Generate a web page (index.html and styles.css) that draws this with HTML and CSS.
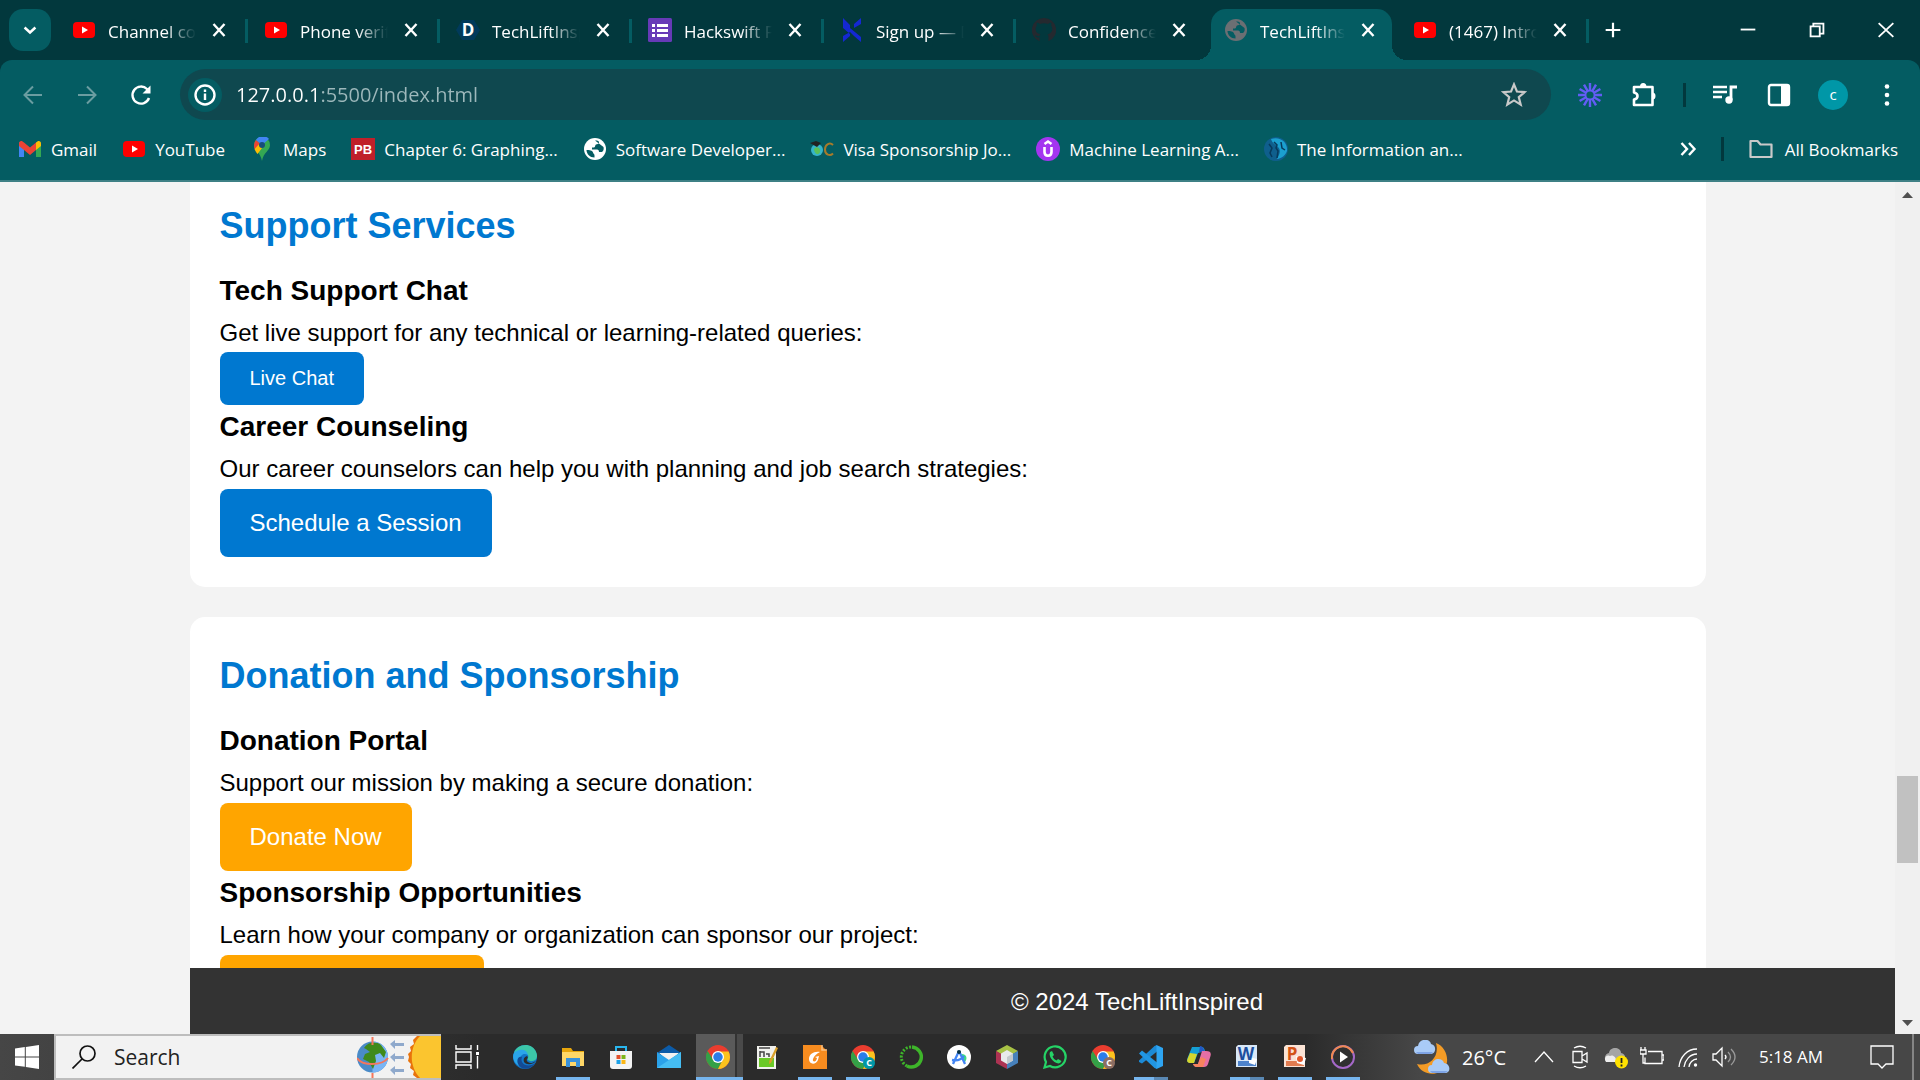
FILE: index.html
```
<!DOCTYPE html>
<html lang="en">
<head>
    <meta charset="UTF-8">
    <meta name="viewport" content="width=device-width, initial-scale=1.0">
    <title>TechLiftInspired</title>
    <link rel="stylesheet" href="styles.css">
</head>
<body>
    <!-- Shared icons -->
    <svg class="sprite" aria-hidden="true">
        <symbol id="i-youtube" viewBox="0 0 24 24">
            <rect x="1" y="4" width="22" height="16" rx="4" fill="#f00"/>
            <path d="M10 8.500v7l6-3.500z" fill="#fff"/>
        </symbol>
        <symbol id="i-globe" viewBox="0 0 24 24">
            <circle cx="12" cy="12" r="11" fill="currentColor"/>
            <path class="land" d="M12 3.500c3 0 4 .5 4 2s-2 1.500-3 2-.5 2.500-2 3H9v2h5c1.500 0 2 1 2 2.500h3c1.500-1 2-3 1.500-5M3.500 13c3 0 6 .5 6.500 2.500s1.500 1 1.500 3v2C7 20.500 3.500 17 3.500 13z"/>
        </symbol>
        <symbol id="i-close" viewBox="0 0 24 24">
            <path d="M6.500 6l11 12M17.500 6l-11 12" stroke="currentColor" stroke-width="2.400" fill="none"/>
        </symbol>
        <symbol id="i-chrome" viewBox="0 0 48 48">
            <circle cx="24" cy="24" r="24" fill="#ea3d2f"/>
            <path d="M3.200 12 14.500 29.500 24 35l9.500-5.500L24 48A24 24 0 0 1 3.200 12z" fill="#34a047"/>
            <path d="M24 13h21.300A24 24 0 0 1 24 48l9.500-18.500z" fill="#fcc31e"/>
            <circle cx="24" cy="24" r="12" fill="#fff"/>
            <circle cx="24" cy="24" r="9.500" fill="#2b7de9"/>
        </symbol>
    </svg>

    <!-- Tab strip -->
    <header class="tab-strip">
        <button class="tab-search" aria-label="Search tabs">
            <svg viewBox="0 0 24 24"><path d="M5.500 9l6.500 6 6.500-6" stroke="#fff" stroke-width="3" fill="none"/></svg>
        </button>
        <div class="tabs">
            <div class="tab">
                <svg class="favicon"><use href="#i-youtube"/></svg>
                <span class="tab-title">Channel content</span>
                <button class="tab-close" aria-label="Close"><svg><use href="#i-close"/></svg></button>
            </div>
            <div class="tab">
                <svg class="favicon"><use href="#i-youtube"/></svg>
                <span class="tab-title">Phone verification</span>
                <button class="tab-close" aria-label="Close"><svg><use href="#i-close"/></svg></button>
            </div>
            <div class="tab">
                <svg class="favicon" viewBox="0 0 24 24"><path d="M6 2h12l6 10-6 10H6L0 12z" fill="#003a5b"/><text x="12" y="18" class="letter">D</text></svg>
                <span class="tab-title">TechLiftInspired</span>
                <button class="tab-close" aria-label="Close"><svg><use href="#i-close"/></svg></button>
            </div>
            <div class="tab">
                <svg class="favicon" viewBox="0 0 24 24"><rect width="24" height="24" rx="1.500" fill="#673ab7"/><path d="M4 6h3v3H4zM9 6h11v3H9zM4 11h3v3H4zM9 11h11v3H9zM4 16h3v3H4zM9 16h11v3H9z" fill="#fff"/></svg>
                <span class="tab-title">Hackswift Form</span>
                <button class="tab-close" aria-label="Close"><svg><use href="#i-close"/></svg></button>
            </div>
            <div class="tab">
                <svg class="favicon" viewBox="0 0 24 24"><path d="M3 0l7 7v9l-7-6zM21 0l-7 6v4l7-4zM10 10l11 9v5l-7-6-4-4zM3 24l7-6v-4l-7 4z" fill="#1428d2"/></svg>
                <span class="tab-title">Sign up — Devpost</span>
                <button class="tab-close" aria-label="Close"><svg><use href="#i-close"/></svg></button>
            </div>
            <div class="tab tab-last">
                <svg class="favicon" viewBox="0 0 24 24"><path d="M12 0a12 12 0 0 0-4.500 23.200v-4c-3 .7-4-.5-4.500-2 2 0 2.500 1.500 4.500 1 0-1 .4-1.500 1-2-4-.6-5-2.700-4.800-5.800.1-1 .5-2 1.100-2.700-.3-1-.2-2 .1-3 1.200 0 2.300.6 3.100 1.200a12 12 0 0 1 8 0c.8-.6 1.900-1.200 3.100-1.200.3 1 .4 2 .1 3 2 2.500 1.500 8-3.700 8.500.7.700 1 1.500 1 2.500v4.500A12 12 0 0 0 12 0z" fill="#24292f"/></svg>
                <span class="tab-title">Confidence-Dev</span>
                <button class="tab-close" aria-label="Close"><svg><use href="#i-close"/></svg></button>
            </div>
            <div class="tab active">
                <svg class="favicon gray"><use href="#i-globe"/></svg>
                <span class="tab-title">TechLiftInspired</span>
                <button class="tab-close" aria-label="Close"><svg><use href="#i-close"/></svg></button>
            </div>
            <div class="tab">
                <svg class="favicon"><use href="#i-youtube"/></svg>
                <span class="tab-title">(1467) Introduction</span>
                <button class="tab-close" aria-label="Close"><svg><use href="#i-close"/></svg></button>
            </div>
        </div>
        <button class="new-tab" aria-label="New tab">
            <svg viewBox="0 0 24 24"><path d="M12 4v16M4 12h16" stroke="#fff" stroke-width="2.400"/></svg>
        </button>
        <div class="window-controls">
            <button aria-label="Minimize"><svg viewBox="0 0 24 24"><path d="M4 11.500h16" stroke="#fff" stroke-width="2"/></svg></button>
            <button aria-label="Restore"><svg viewBox="0 0 24 24"><path d="M5 8h10v11H5zM8 8V5h11v11h-4" fill="none" stroke="#fff" stroke-width="2"/></svg></button>
            <button aria-label="Close window"><svg viewBox="0 0 24 24"><path d="M4 4.500l16 15M20 4.500l-16 15" stroke="#fff" stroke-width="2"/></svg></button>
        </div>
    </header>

    <!-- Address bar -->
    <div class="browser-bars">
        <nav class="toolbar">
            <button class="dim" aria-label="Back"><svg viewBox="0 0 24 24"><path d="M21 12H4M12 3.500 3.500 12l8.500 8.500" class="line"/></svg></button>
            <button class="dim" aria-label="Forward"><svg viewBox="0 0 24 24"><path d="M3 12h17M12 3.500l8.500 8.500-8.500 8.500" class="line"/></svg></button>
            <button aria-label="Reload"><svg viewBox="0 0 24 24"><path d="M20 15a8.500 8.500 0 1 1-2-9l2 2.500" class="line bold"/><path d="M21.500 2.500v8h-8z" fill="#fff"/></svg></button>
            <div class="omnibox">
                <button class="site-info" aria-label="Site information"><svg viewBox="0 0 24 24"><circle cx="12" cy="12" r="9.500" class="line bold"/><path d="M12 10.500V17M12 6.500V9" class="line bold"/></svg></button>
                <input class="url" type="text" value="127.0.0.1:5500/index.html" aria-label="Address">
                <button class="star" aria-label="Bookmark this page"><svg viewBox="0 0 24 24"><path d="M12 2.200l2.700 6.600 7.200.5-5.500 4.600 1.800 7L12 17l-6.200 3.900 1.800-7-5.500-4.600 7.200-.5z" class="line"/></svg></button>
            </div>
            <button aria-label="Loom"><svg viewBox="0 0 24 24"><g stroke="#625df5" stroke-width="2.400"><path d="M12 0v24M0 12h24M6 1.600l12 20.800M18 1.600 6 22.400M1.600 6l20.800 12M1.600 18 22.400 6"/></g><circle cx="12" cy="12" r="4.500" fill="#045c62" stroke="#625df5" stroke-width="1.800"/></svg></button>
            <button aria-label="Extensions"><svg viewBox="0 0 24 24"><path d="M2 4h18.500v18H2v-5.500c2.500-.5 3.500-2 3.500-3.500S4.500 10 2 9.500z" fill="none" stroke="#fff" stroke-width="2.600" stroke-linejoin="round"/><path d="M8 3.500a3.200 3.500 0 0 1 6.400 0zM20.500 9.500a3 3.500 0 0 1 0 7z" fill="#fff"/></svg></button>
            <span class="divider"></span>
            <button aria-label="Media controls"><svg viewBox="0 0 24 24"><path d="M0 4h14M0 9h14M0 14h9" stroke="#fff" stroke-width="2.600"/><path d="M18 17V4h6" fill="none" stroke="#fff" stroke-width="2.800"/><circle cx="16" cy="17" r="3.700" fill="#fff"/></svg></button>
            <button aria-label="Side panel"><svg viewBox="0 0 24 24"><rect x="2" y="2" width="20" height="20" rx="2" fill="none" stroke="#fff" stroke-width="2.400"/><path d="M14 2h7v20h-7z" fill="#fff"/></svg></button>
            <button aria-label="Profile"><span class="avatar">c</span></button>
            <button aria-label="Menu"><svg viewBox="0 0 24 24"><circle cx="12" cy="3.500" r="2.300" fill="#fff"/><circle cx="12" cy="12" r="2.300" fill="#fff"/><circle cx="12" cy="20.500" r="2.300" fill="#fff"/></svg></button>
        </nav>

        <!-- Bookmarks -->
        <nav class="bookmarks">
            <a href="#"><svg viewBox="0 0 24 24"><path d="M1 20V5l5 4v11z" fill="#4285f4"/><path d="M18 20V9l5-4v15z" fill="#34a853"/><path d="M18 9V5.500c2-2.500 5-2 5 1V9l-5 4z" fill="#fbbc04"/><path d="M1 9V6.500c0-3 3-3.500 5-1l6 5 6-5V13l-6 5-6-5z" fill="#ea4335"/></svg>Gmail</a>
            <a href="#"><svg><use href="#i-youtube"/></svg>YouTube</a>
            <a href="#"><svg viewBox="0 0 24 24"><path d="M12 0a8 8 0 0 1 8 8c0 6-6.500 7-8 16-1.500-9-8-10-8-16a8 8 0 0 1 8-8z" fill="#34a853"/><path d="M4 8a8 8 0 0 1 2-5l6 5-7 5c-.7-1.500-1-3-1-5z" fill="#ea4335"/><path d="M4.600 12 12 4v7l-4.500 6c-1.400-2-2.400-3-2.900-5z" fill="#fbbc04"/><path d="M6 3a8 8 0 0 1 13-1l-7 6z" fill="#4285f4"/><circle cx="12" cy="8" r="3" fill="#174e7a"/></svg>Maps</a>
            <a href="#"><svg viewBox="0 0 24 24"><path d="M0 1h24v22H0z" fill="#c0202a"/><text x="12" y="17" class="letter small">PB</text></svg>Chapter 6: Graphing...</a>
            <a href="#"><svg class="white"><use href="#i-globe"/></svg>Software Developer...</a>
            <a href="#"><svg viewBox="0 0 24 24"><circle cx="7" cy="13" r="6" fill="#35b5c9"/><path d="M4 13c0-3 5-4 6 0s-4 7-6 0z" fill="#5ac15a"/><path d="M0 6l6-2 5 2-4 4z" fill="#222"/><path d="M23 8c-3-3-8-1-8 4.500s5 7 8 4" fill="none" stroke="#a77b2a" stroke-width="2"/></svg>Visa Sponsorship Jo...</a>
            <a href="#"><svg viewBox="0 0 24 24"><circle cx="12" cy="12" r="12" fill="#a435f0"/><path d="M8.500 10v5c0 5 7 5 7 0v-5M8.500 7l3.500-2.500L15.500 7" fill="none" stroke="#fff" stroke-width="2.600"/></svg>Machine Learning A...</a>
            <a href="#"><svg viewBox="0 0 24 24"><circle cx="12" cy="12" r="12" fill="#0f5f8d"/><path d="M7 2c10-3 17 4 16 12-2 6-8 8-10 8 3-5 4-9 1-12s-6-4-7-8z" fill="#1ba0cf"/><path d="M10 5l3 3-1 3 2 3-1 7M5 7l3 4-2 5 2 4M17 5l1 6 3 2" fill="none" stroke="#073a5c" stroke-width="1.500"/></svg>The Information an...</a>
            <button class="more" aria-label="More bookmarks"><svg viewBox="0 0 24 24"><path d="M5.500 6l5.500 6-5.500 6M13 6l5.500 6-5.500 6" class="line bold"/></svg></button>
            <span class="divider"></span>
            <a class="all" href="#"><svg viewBox="0 0 24 24"><path d="M1.500 4h7l3 3.500h11V20h-21z" fill="none" stroke="#c9c9c9" stroke-width="2.200" stroke-linejoin="round"/></svg>All Bookmarks</a>
        </nav>
    </div>

    <!-- Page -->
    <div class="viewport">
        <main class="page">
            <section class="card scrolled">
                <h2>Support Services</h2>
                <h3>Tech Support Chat</h3>
                <p>Get live support for any technical or learning-related queries:</p>
                <button class="btn">Live Chat</button>
                <h3>Career Counseling</h3>
                <p>Our career counselors can help you with planning and job search strategies:</p>
                <a class="btn" href="#">Schedule a Session</a>
            </section>
            <section class="card">
                <h2>Donation and Sponsorship</h2>
                <h3>Donation Portal</h3>
                <p>Support our mission by making a secure donation:</p>
                <a class="btn donate" href="#">Donate Now</a>
                <h3>Sponsorship Opportunities</h3>
                <p>Learn how your company or organization can sponsor our project:</p>
                <a class="btn donate" href="#">Become a Sponsor</a>
            </section>
            <footer>© 2024 TechLiftInspired</footer>
        </main>
        <div class="scrollbar">
            <svg viewBox="0 0 25 25"><path d="M7 16l5.500-6 5.500 6z" fill="#505050"/></svg>
            <span class="track-top"></span>
            <span class="thumb"></span>
            <span class="track-bottom"></span>
            <svg viewBox="0 0 25 25"><path d="M7 11l5.500 6 5.500-6z" fill="#505050"/></svg>
        </div>
    </div>

    <!-- Taskbar -->
    <div class="taskbar">
        <button class="start" aria-label="Start"><svg viewBox="0 0 24 24"><path d="M0 3.400 9.800 2v9.400H0zM10.800 1.900 24 0v11.400H10.800zM0 12.400h9.800v9.400L0 20.500zM10.800 12.400H24V24l-13.200-1.900z" fill="#fff"/></svg></button>
        <label class="search">
            <svg class="glass" viewBox="0 0 24 24"><circle cx="15.500" cy="8.500" r="7.500" fill="none" stroke="#111" stroke-width="1.700"/><path d="M10 14 .5 23.500" stroke="#111" stroke-width="1.700"/></svg>
            <input type="text" placeholder="Search" aria-label="Search">
            <svg class="doodle" viewBox="0 0 84 42">
                <circle cx="15.500" cy="21" r="15.500" fill="#4a8bc8"/>
                <path d="M15.500 5.500a15.500 15.500 0 0 1 0 31z" fill="#7ab5f5"/>
                <path d="M7 12c4-6 12-7 17-3l5 7-2 6-4-5-5 2 1 6-3 8-4-7-6-3 2-5 5-2-4-3z" fill="#3f8a1c"/>
                <path d="M15.500 1v8M15.500 37v5M0 22c5 8 25 8 31 0" fill="none" stroke="#f4765c" stroke-width="2"/>
                <path d="M33 8l5-4v3h9v3h-9v3zM33 21l5-4v3h9v3h-9v3zM33 34l5-4v3h9v3h-9v3z" fill="#8fa9cc"/>
                <path d="M60 0l-4 4 1 4-4 3 1 4-3 3 1 3-1 4 3 3-1 4 4 3-1 4 4 3h24V0z" fill="#e8730c"/>
                <path d="M63 0c-11 11-11 31 0 42h21V0z" fill="#fbc52f"/>
            </svg>
        </label>
        <button class="task-view" aria-label="Task view"><svg viewBox="0 0 24 24"><path d="M1 0v4h15V0M1 24v-4h15v4M1 7h15v10H1zM22.500 0v5M22.500 11v12.500" fill="none" stroke="#fff" stroke-width="1.400"/><path d="M21 7h3v3h-3z" fill="#fff"/></svg></button>
        <div class="apps">
            <button aria-label="Edge"><svg viewBox="0 0 24 24"><circle cx="12" cy="12" r="12" fill="#1176c8"/><path d="M1 8C4-2 20-3 23.500 8c2 6-2 9-6.500 8-2-.5-3-1.500-2-3 2-5-7-8-14-5z" fill="#3cc6a8"/><path d="M1 8c5-5 13-4 14 2-7-4-11 5-5 12C3 21-2 14 1 8z" fill="#2aa5ea"/><path d="M9 12c-2 5 2 10 10 8l3-2c-4 7-14 8-17 1-2-5 1-8 4-7z" fill="#134a94"/><path d="M14 14c-1 2 1 4 5 4l4-2c-2 3-9 5-12 1-1-3 0-5 3-6 1 1 1 2 0 3z" fill="#2b2b2b"/></svg></button>
            <button class="open" aria-label="File Explorer"><svg viewBox="0 0 24 24"><path d="M1 3h9l2 3h11v6H1z" fill="#e8a60c"/><path d="M1 7h22v14H1z" fill="#ffd767"/><path d="M5 22v-9h14v9h-4v-5H9v5z" fill="#3a92da"/></svg></button>
            <button aria-label="Store"><svg viewBox="0 0 24 24"><path d="M7 7V2h10v5" fill="none" stroke="#29b6ee" stroke-width="2"/><path d="M1 6h22v15q0 3-3 3H4q-3 0-3-3z" fill="#f3f3f3"/><path d="M7.500 10h4v4h-4z" fill="#e2502a"/><path d="M12.500 10h4v4h-4z" fill="#7cb518"/><path d="M7.500 15h4v4h-4z" fill="#1ba1e8"/><path d="M12.500 15h4v4h-4z" fill="#fbb615"/></svg></button>
            <button aria-label="Mail"><svg viewBox="0 0 24 24"><path d="M0 8l12-8 12 8z" fill="#0c5ba8"/><path d="M2 8h20l-10 9z" fill="#f2f2f2"/><path d="M0 7l12 8 12-8v16H0z" fill="#2aa2ea"/><path d="M24 7v16H0l12-8z" fill="#45bdf3"/></svg></button>
            <button class="open current" aria-label="Chrome"><svg><use href="#i-chrome"/></svg></button>
            <button aria-label="Notepad++"><svg viewBox="0 0 24 24"><path d="M2 1h19v23H2z" fill="#f2f2ee"/><path d="M4 13h15v9H4z" fill="#6ac926"/><path d="M4 3h11M5 6v6M5 7h4v5M11 9h3v3" stroke="#444" stroke-width="1.500" fill="none"/><path d="M21 2l2 1-7 15-2 1 .3-3z" fill="#d9a02b"/></svg></button>
            <button class="open" aria-label="Foxit"><svg viewBox="0 0 24 24"><path d="M0 0h18l6 6v18H0z" fill="#f78c1f"/><path d="M19 0v5h5" fill="none" stroke="#fbc183" stroke-width="1.500"/><path d="M17 7c-6-1-11 2-11 7 0 6 7 6 9 1l1-4-4 1 2 1c-1 5-5 4-4 1s3-5 7-7z" fill="#fff"/></svg></button>
            <button class="open" aria-label="Chrome profile C"><svg viewBox="0 0 24 24"><use href="#i-chrome" width="24" height="24"/><circle cx="18" cy="18" r="6" fill="#0097a7"/><text x="18" y="21" class="letter tiny">C</text></svg></button>
            <button aria-label="Anaconda"><svg viewBox="0 0 24 24"><path d="M13 2a10 10 0 1 1-5 19" fill="none" stroke="#3eb52a" stroke-width="3.500"/><path d="M8 21A10 10 0 0 1 13 2" fill="none" stroke="#3eb52a" stroke-width="3" stroke-dasharray="2 1.500"/></svg></button>
            <button aria-label="Android Studio"><svg viewBox="0 0 24 24"><circle cx="12" cy="12" r="12" fill="#fff"/><path d="M15 9c4 0 6 4 3 8l-4-5z" fill="#3ddc84"/><path d="M12 6 6 19M12 6l6 13M5 15c5 1 9 0 12-4" fill="none" stroke="#4285f4" stroke-width="2.300"/><circle cx="12" cy="7" r="2" fill="#073042"/></svg></button>
            <button aria-label="NetBeans"><svg viewBox="0 0 24 24"><path d="M12 0l11 6-11 7L1 6z" fill="#a8c245"/><path d="M1 6l11 6v12L1 18z" fill="#ad3353"/><path d="M23 6l-11 6v12l11-6z" fill="#4781bb"/><path d="M12 5l6 3.500v7L12 19l-6-3.500v-7z" fill="#e8eaea"/><path d="M12 12l6-3.500v7L12 19z" fill="#c3c9cb"/></svg></button>
            <button aria-label="WhatsApp"><svg viewBox="0 0 24 24"><path d="M1.500 22.500 3 17a10.500 10.500 0 1 1 4 4z" fill="none" stroke="#25d366" stroke-width="2.200"/><path d="M7 7l2-1 2 4-1.500 1.500c1 2 2 3 4 4L15 14l3.500 2c-1 3-4 3-7 1S5.500 10 7 7z" fill="#25d366"/></svg></button>
            <button aria-label="Chrome profile 2"><svg viewBox="0 0 24 24"><use href="#i-chrome" width="24" height="24"/><circle cx="18" cy="18" r="6" fill="#8d6e63"/><text x="18" y="21" class="letter tiny">C</text></svg></button>
            <button class="open group" aria-label="VS Code"><svg viewBox="0 0 24 24"><path d="M0 15.500 15.500 1 18 0v6.500L3 18.500 0 17z" fill="#1c8ad6"/><path d="M0 8.500 3 5.500l15 12V24l-2.500-1z" fill="#2196e3"/><path d="M17.500 0 24 3v18l-6.500 3z" fill="#2ea5f2"/></svg></button>
            <button aria-label="Copilot"><svg viewBox="0 0 24 24"><path d="M5 2h10q2 0 3 4l-7 2-4 10H4q-5 0-3.500-5z" fill="#159fd4"/><path d="M3 8l7 1-3 9H4q-5 0-3.500-4z" fill="#d6d62c"/><path d="M13 1q3 0 4 4l1 2h-6z" fill="#2359c4"/><path d="M19 6q6 0 4.500 5L21 19q-1 3-4 3H9q-2 0-3-3h5l4-13z" fill="#e66fa5"/><path d="M6 19h5l3-7 5 2-3 8H9q-2 0-3-3z" fill="#f8835e"/></svg></button>
            <button class="open group" aria-label="Word"><svg viewBox="0 0 24 24"><path d="M3 0h19v22H1V2z" fill="#d9e8f8"/><path d="M3 16h18v5H3z" fill="#4d83cc"/><path d="M14 12l8 2-2 6-6-2z" fill="#fff"/><text x="11" y="15" class="letter word">W</text></svg></button>
            <button class="open" aria-label="PowerPoint"><svg viewBox="0 0 24 24"><path d="M3 0h19v22H1V2z" fill="#fbe3d5"/><path d="M3 16h18v5H3z" fill="#e27c50"/><path d="M13 11l10 2-2 7-7-2z" fill="#fff"/><circle cx="17" cy="14" r="3" fill="#e2572b"/><text x="9" y="15" class="letter ppt">P</text></svg></button>
            <button class="open" aria-label="Media player"><svg viewBox="0 0 24 24"><circle cx="12" cy="12" r="11" fill="#303030" stroke="#a568c8" stroke-width="2"/><path d="M1 14A11 11 0 0 1 22 8" fill="none" stroke="#f08a50" stroke-width="2"/><path d="M9 6.500v11l8-5.500z" fill="#fff"/></svg></button>
        </div>
        <div class="tray">
            <button class="weather">
                <svg viewBox="0 0 36 34"><path d="M22 3c13 5 15 24 4 29-9 4-19 1-23-8 12 3 23-7 19-21z" fill="#f39b26"/><path d="M4 14a4 4 0 0 1 0-8c1-8 12-8 13-2 6 1 5 10 0 10zM18 33a4 4 0 0 1 0-8c1-8 11-7 12-2 7 1 7 10 1 10z" fill="#a9cbf7"/><path d="M2 12h17l-2 2H4zM16 31h18l-3 2H18z" fill="#7ea4e6"/></svg>
                26°C
            </button>
            <button aria-label="Show hidden icons"><svg viewBox="0 0 24 24"><path d="M3 17l9-10 9 10" class="thin"/></svg></button>
            <button aria-label="Meet now"><svg viewBox="0 0 24 24"><path d="M5 6.500h9v11H5zM14 11l5-3v9l-5-3M6 3q6-3.500 12 0M6 21q6 3.500 12 0" class="thin"/></svg></button>
            <button aria-label="OneDrive"><svg viewBox="0 0 24 24"><path d="M3 17a5 5 0 0 1 2-9c1-7 12-6 12 0 5 0 6 9 1 9z" fill="#a5a5a5"/><path d="M2 17c-3-4 1-8 4-6 3-2 7 2 6 6z" fill="#eee"/><circle cx="17.500" cy="17" r="6.500" fill="#ffe100"/><path d="M17.500 13v5M17.500 19.500v2" stroke="#222" stroke-width="1.800"/></svg></button>
            <button aria-label="Battery"><svg viewBox="0 0 24 24"><path d="M8 6.500h14v12H5v-6M22 10h2v5h-2M1 2v3M5 2v3M0 5h6v4H0zM3 9v9h2" class="thin"/></svg></button>
            <button aria-label="Network"><svg viewBox="0 0 24 24"><path d="M3 22C4 12 11 4 21 4M8 22c1-7 6-13 13-13M13 22c0-4 4-8 8-8" class="thin"/><circle cx="19.500" cy="20" r="1.700" fill="#fff"/></svg></button>
            <button aria-label="Volume"><svg viewBox="0 0 24 24"><path d="M1 9h3l6-6v18l-6-6H1zM13 10q2 2 0 4" class="thin"/><path d="M16 7q5 5 0 10M19 4q8 8 0 16" class="thin faint"/></svg></button>
            <time class="clock">5:18 AM</time>
            <button class="notifications" aria-label="Notifications"><svg viewBox="0 0 24 24"><path d="M1 1h22v18h-7l-4 4-4-4H1z" class="thin"/></svg></button>
            <span class="show-desktop"></span>
        </div>
    </div>
</body>
</html>
```

FILE: styles.css
```
/* General */
* {
    box-sizing: border-box;
}

body {
    margin: 0;
    height: 100vh;
    display: flex;
    flex-direction: column;
    overflow: hidden;
    font-family: "Segoe UI", "Open Sans", sans-serif;
    font-size: 17px;
    color: #fff;
    background-color: #02383d;
}

button {
    padding: 0;
    border: none;
    background: none;
    color: inherit;
    font-family: inherit;
    display: flex;
    align-items: center;
    justify-content: center;
}

input {
    border: none;
    outline: none;
    background: none;
    font-family: inherit;
    padding: 0;
    min-width: 0;
}

a {
    color: inherit;
    text-decoration: none;
}

svg {
    display: block;
    width: 24px;
    height: 24px;
    flex-shrink: 0;
}

.sprite {
    position: absolute;
    width: 0;
    height: 0;
}

.line {
    fill: none;
    stroke: currentColor;
    stroke-width: 2;
}

.bold {
    stroke-width: 2.4;
}

.thin {
    fill: none;
    stroke: #fff;
    stroke-width: 1.3;
}

.faint {
    stroke: #999;
}

.letter {
    font-family: "Open Sans", sans-serif;
    font-size: 17px;
    font-weight: bold;
    text-anchor: middle;
    fill: #fff;
}

.letter.small {
    font-size: 13px;
    font-family: "Liberation Sans", sans-serif;
}

.letter.tiny {
    font-size: 9px;
}

.letter.word {
    fill: #1d4f9f;
}

.letter.ppt {
    fill: #d35217;
}

/* Tab strip */
.tab-strip {
    height: 60px;
    flex-shrink: 0;
    display: flex;
    align-items: center;
    padding-left: 9px;
}

.tab-search {
    width: 42px;
    height: 42px;
    margin-right: 4px;
    border-radius: 14px;
    background-color: #045c62;
}

.tab-search svg {
    width: 20px;
    height: 20px;
}

.tabs {
    display: flex;
    height: 100%;
}

.tab {
    position: relative;
    width: 192px;
    padding: 0 16px 0 17px;
    display: flex;
    align-items: center;
}

/* Separator between tabs */
.tab::after {
    content: "";
    position: absolute;
    right: -1px;
    top: 19px;
    width: 3px;
    height: 24px;
    background-color: #045c62;
}

.tab-last::after {
    display: none;
}

.favicon {
    position: relative;
}

.gray {
    color: #6b6f73;
}

.gray,
.white {
    --land: #045c62;
}

.white {
    color: #fff;
}

.land {
    fill: var(--land);
}

.tab-title {
    position: relative;
    flex: 1;
    margin-left: 12px;
    padding-top: 2px;
    white-space: nowrap;
    overflow: hidden;
    -webkit-mask-image: linear-gradient(to right, #000 65%, transparent 100%);
    mask-image: linear-gradient(to right, #000 65%, transparent 100%);
}

.tab-close {
    position: relative;
    width: 24px;
    height: 24px;
    margin-left: 11px;
}

.tab.active {
    width: 189px;
}

.tab.active::before {
    content: "";
    position: absolute;
    left: 4px;
    right: 4px;
    top: 9px;
    bottom: 0;
    border-radius: 15px 15px 0 0;
    background-color: #045c62;
}

/* Curved feet of the active tab */
.tab.active::after {
    left: -11px;
    right: -11px;
    top: auto;
    bottom: 0;
    width: auto;
    height: 15px;
    background:
        radial-gradient(circle at 0 0, transparent 15px, #045c62 15px) left / 15px 15px no-repeat,
        radial-gradient(circle at 100% 0, transparent 15px, #045c62 15px) right / 15px 15px no-repeat;
}

.new-tab {
    margin-left: 14px;
}

.new-tab svg {
    width: 22px;
    height: 22px;
}

.window-controls {
    margin-left: auto;
    display: flex;
}

.window-controls button {
    width: 69px;
    height: 60px;
}

.window-controls svg {
    width: 22px;
    height: 22px;
}

/* Toolbar and bookmarks */
.browser-bars {
    flex-shrink: 0;
    height: 122px;
    background-color: #045c62;
    border-bottom: 2px solid #3e8085;
    border-radius: 12px 12px 0 0;
}

.toolbar {
    height: 69px;
    display: flex;
    align-items: center;
    padding: 0 6px;
}

.toolbar > button {
    width: 54px;
}

.toolbar .dim {
    color: #6b9da1;
}

.omnibox {
    flex: 1;
    height: 51px;
    margin: 0 12px;
    padding: 0 24px 0 8px;
    display: flex;
    align-items: center;
    border-radius: 26px;
    background-color: #0f484f;
}

.site-info {
    width: 34px;
    height: 34px;
    border-radius: 50%;
    background-color: #045c62;
}

.url {
    flex: 1;
    height: 40px;
    margin-left: 14px;
    font-size: 20px;
    color: transparent;
    background: linear-gradient(to right, #fff 84px, #9db8bb 84px);
    -webkit-background-clip: text;
    background-clip: text;
}

.star {
    color: #c9c9c9;
}

.toolbar .star svg {
    width: 26px;
    height: 26px;
}

.toolbar .divider,
.bookmarks .divider {
    width: 3px;
    height: 24px;
    margin: 0 12px;
    background-color: #02383d;
}

.avatar {
    width: 30px;
    height: 30px;
    border-radius: 50%;
    background-color: #0097a7;
    font-size: 15px;
    line-height: 28px;
}

.bookmarks {
    height: 40px;
    display: flex;
    align-items: center;
    gap: 25px;
    padding: 0 22px 0 18px;
    white-space: nowrap;
}

.bookmarks a {
    display: flex;
    align-items: center;
    gap: 9px;
}

.bookmarks .more {
    margin-left: auto;
    margin-right: -4px;
}

.bookmarks .divider {
    margin: 0;
}

.bookmarks .all {
    gap: 12px;
}

/* Page content */
.viewport {
    flex: 1;
    min-height: 0;
    display: flex;
    background-color: #f3f3f3;
}

.page {
    position: relative;
    flex: 1;
    overflow: hidden;
    font-family: Arial, "Liberation Sans", sans-serif;
    font-size: 24px;
    line-height: 38px;
    color: #000;
}

.card {
    width: 80%;
    margin: 0 auto 30px;
    padding: 30px;
    background-color: #fff;
    border-radius: 15px;
}

/* Top of this card is above the fold */
.card.scrolled {
    padding-top: 15px;
    border-radius: 0 0 15px 15px;
}

.card h2 {
    margin: 0 0 14px;
    font-size: 36px;
    line-height: 58px;
    color: #0078d0;
}

.card h3 {
    margin: 0 0 2px;
    font-size: 28px;
    line-height: 43px;
}

.card p {
    margin: 0;
}

.btn {
    display: block;
    width: fit-content;
    margin-top: 1px;
    padding: 15px 30px;
    border-radius: 8px;
    background-color: #0078d0;
    color: #fff;
}

button.btn {
    margin-top: 0;
    font-size: 20px;
    line-height: 23px;
}

.btn.donate {
    background-color: #ffa500;
}

footer {
    position: absolute;
    left: 10%;
    bottom: 0;
    width: 100%;
    padding: 15px 0 13px;
    text-align: center;
    color: #fff;
    background-color: #333;
}

/* Scrollbar */
.scrollbar {
    width: 25px;
    display: flex;
    flex-direction: column;
    background-color: #f0f0f0;
}

.scrollbar svg {
    width: 25px;
    height: 25px;
}

.track-top {
    flex: 569;
}

.thumb {
    flex: 87;
    margin: 0 2px;
    background-color: #c1c1c1;
}

.track-bottom {
    flex: 146;
}

/* Taskbar */
.taskbar {
    flex-shrink: 0;
    height: 46px;
    display: flex;
    align-items: stretch;
    background: linear-gradient(to right, #464646, #2b2b2b 25%, #2b2b2b 68%, #474747 74%, #474747);
}

.start {
    width: 54px;
}

.search {
    width: 387px;
    padding-left: 16px;
    display: flex;
    align-items: center;
    border: 2px solid #bdbdbd;
    border-right: none;
    background-color: #f2f2f2;
}

.search input {
    flex: 1;
    margin-left: 18px;
    font-size: 21px;
    color: #222;
}

.search input::placeholder {
    color: #222;
    opacity: 1;
}

.doodle {
    width: 84px;
    height: 42px;
}

.task-view {
    width: 60px;
    padding-right: 8px;
}

.apps {
    display: flex;
}

.apps button {
    position: relative;
    width: 48px;
}

.apps .open::after {
    content: "";
    position: absolute;
    left: 7px;
    right: 7px;
    bottom: 0;
    height: 3px;
    background-color: #76b5ee;
}

.apps .group::after {
    background: linear-gradient(to right, #76b5ee 60%, #5a88b3 60%);
}

.apps .current {
    width: 50px;
    background: linear-gradient(to right, transparent 3px, #5a5a5a 3px, #5a5a5a 42px, #333 42px, #333 44px, #4a4a4a 44px);
}

.apps .current::after {
    left: 3px;
    right: 0;
}

.tray {
    margin-left: auto;
    display: flex;
}

.tray button {
    width: 36px;
}

.tray .weather {
    width: auto;
    gap: 12px;
    margin-right: 20px;
    font-size: 20px;
}

.weather svg {
    width: 36px;
    height: 34px;
}

.clock {
    width: 98px;
    font-size: 17px;
    line-height: 46px;
    text-align: center;
}

.tray .notifications {
    width: 72px;
    padding-left: 12px;
}

.show-desktop {
    width: 8px;
    border-left: 2px solid #858585;
}
```
